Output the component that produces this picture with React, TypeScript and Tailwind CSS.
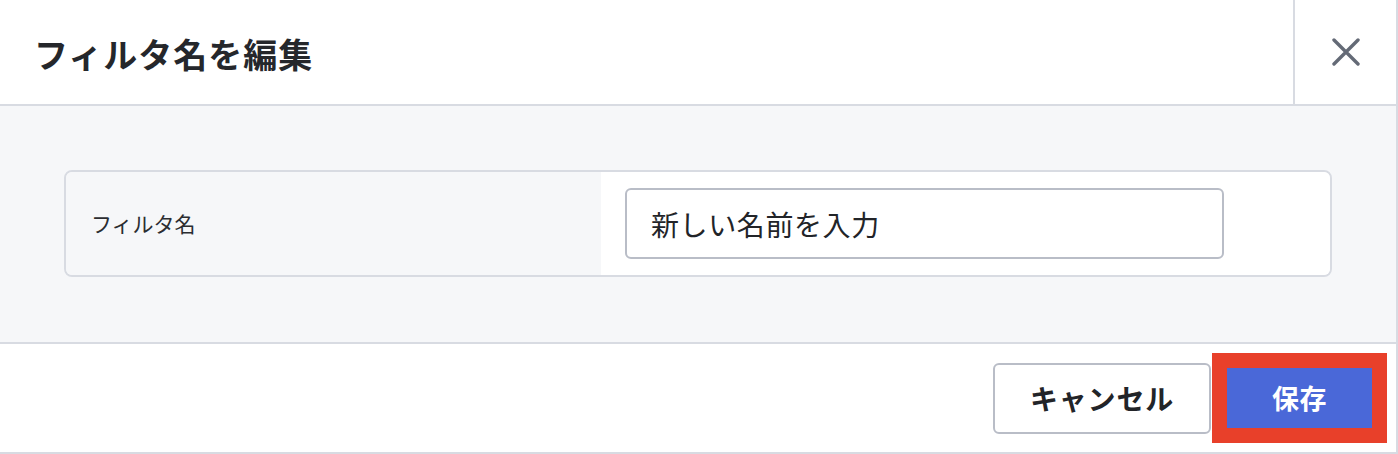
import React from "react";

const jp = { fontFamily: '"Noto Sans CJK JP", "Noto Sans", sans-serif' };

export default function App() {
  return (
    <div
      style={jp}
      className="w-[1398px] h-[454px] flex flex-col bg-white border-r-2 border-b-2 border-[#d8dbe2] overflow-hidden"
    >
      {/* Header */}
      <div className="h-[106px] shrink-0 flex border-b-2 border-[#d8dbe2]">
        <div className="flex-1 flex items-center pl-[34px] pt-[4px]">
          <h2 className="text-[34px] font-bold text-[#25272b] leading-none tracking-[1px]">
            フィルタ名を編集
          </h2>
        </div>
        <button className="w-[103px] shrink-0 border-l-2 border-[#d8dbe2] flex items-center justify-center">
          <svg width="28" height="28" viewBox="0 0 28 28" fill="none">
            <path
              d="M2 2 L26 26 M26 2 L2 26"
              stroke="#646a76"
              strokeWidth="3.4"
              strokeLinecap="round"
            />
          </svg>
        </button>
      </div>

      {/* Body */}
      <div className="h-[238px] shrink-0 bg-[#f6f7f9] border-b-2 border-[#d8dbe2] px-[64px] pt-[64px]">
        <div className="flex border-2 border-[#d8dbe2] rounded-[8px] overflow-hidden">
          <div className="w-[535px] shrink-0 bg-[#f6f7f9] flex items-center pl-[25px]">
            <span className="text-[21px] text-[#2b2d31]">フィルタ名</span>
          </div>
          <div className="flex-1 bg-white pl-[24px] py-[16px]">
            <input
              defaultValue="新しい名前を入力"
              style={jp}
              className="w-[599px] h-[71px] border-2 border-[#b9bdc7] rounded-[6px] px-[24px] text-[28px] tracking-[0.6px] text-[#222428] outline-none"
            />
          </div>
        </div>
      </div>

      {/* Footer */}
      <div className="flex-1 flex items-center justify-end pr-[9px] gap-[1px]">
        <button className="w-[218px] h-[71px] border-2 border-[#b9bdc7] rounded-[6px] bg-white text-[28px] tracking-[0.8px] font-bold text-[#222428]">
          キャンセル
        </button>
        <div className="w-[175px] h-[90px] bg-[#e8402a] p-[15px]">
          <button className="w-full h-full bg-[#4a68d8] text-white text-[27px] tracking-[0.5px] font-bold">
            保存
          </button>
        </div>
      </div>
    </div>
  );
}
